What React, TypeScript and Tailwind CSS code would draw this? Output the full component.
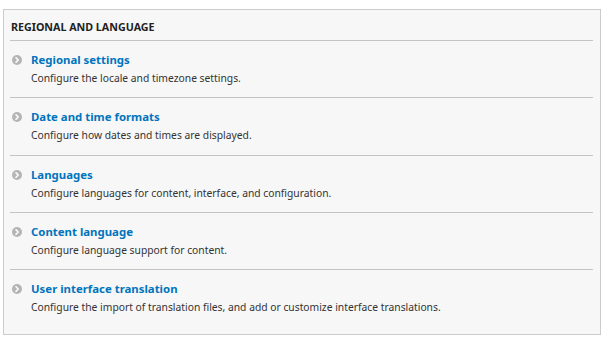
import React from 'react'

const items = [
  { title: 'Regional settings', description: 'Configure the locale and timezone settings.' },
  { title: 'Date and time formats', description: 'Configure how dates and times are displayed.' },
  { title: 'Languages', description: 'Configure languages for content, interface, and configuration.' },
  { title: 'Content language', description: 'Configure language support for content.' },
  {
    title: 'User interface translation',
    description: 'Configure the import of translation files, and add or customize interface translations.',
  },
]

const Bullet = () => (
  <svg width="10" height="10" viewBox="0 0 10 10" className="shrink-0">
    <circle cx="5" cy="5" r="5" fill="#b5b5b5" />
    <path d="M4 2.8 L6.2 5 L4 7.2" stroke="#fff" strokeWidth="1.6" fill="none" strokeLinecap="round" strokeLinejoin="round" />
  </svg>
)

export default function App() {
  return (
    <div className="w-[612px] h-[348px] bg-white pt-[9px] pl-[3px] font-['Noto_Sans',sans-serif]">
      <div className="w-[598px] border border-[#cccccc] bg-[#f7f7f7] pb-[8px]">
        <h3 className="ml-[6px] mr-[7px] h-[31px] border-b border-[#c4c4c4] pt-[10px] pl-[1px] text-[10.7px] leading-[14px] font-bold uppercase text-[#222]">
          Regional and Language
        </h3>
        <ul className="ml-[6px] mr-[7px]">
          {items.map((item, index) => (
            <li
              key={index}
              className={
                index === items.length - 1
                  ? 'pt-[11px] pb-[12px]'
                  : index === 1
                    ? 'pt-[11px] pb-[13px] border-b border-[#c4c4c4]'
                    : 'pt-[11px] pb-[12px] border-b border-[#c4c4c4]'
              }
            >
              <div className="flex items-center gap-[9px] pl-[2px]">
                <Bullet />
                <a className="text-[11.4px] leading-[16px] font-bold text-[#0074bd]">{item.title}</a>
              </div>
              <p className="mt-[3px] pl-[21px] text-[10.3px] leading-[14px] text-[#333]">{item.description}</p>
            </li>
          ))}
        </ul>
      </div>
    </div>
  )
}
